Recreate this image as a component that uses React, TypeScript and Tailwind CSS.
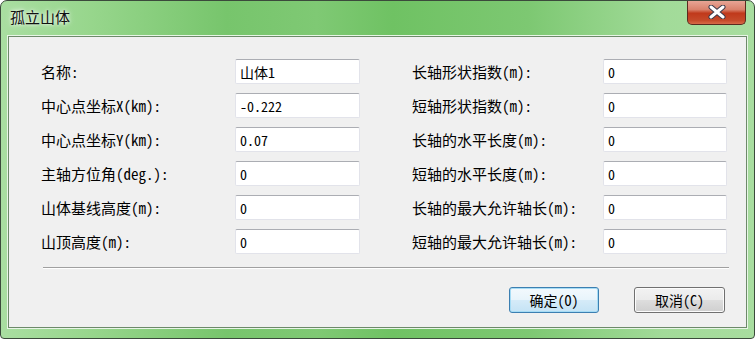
import React from "react";

const leftRows: [string, string][] = [
  ["名称:", "山体1"],
  ["中心点坐标X(km):", "-0.222"],
  ["中心点坐标Y(km):", "0.07"],
  ["主轴方位角(deg.):", "0"],
  ["山体基线高度(m):", "0"],
  ["山顶高度(m):", "0"],
];

const rightRows: [string, string][] = [
  ["长轴形状指数(m):", "0"],
  ["短轴形状指数(m):", "0"],
  ["长轴的水平长度(m):", "0"],
  ["短轴的水平长度(m):", "0"],
  ["长轴的最大允许轴长(m):", "0"],
  ["短轴的最大允许轴长(m):", "0"],
];

const font = { fontFamily: '"Noto Sans CJK SC", "DejaVu Sans", sans-serif' };
const monoFont = {
  fontFamily: '"Noto Sans Mono CJK SC", "Noto Sans CJK SC", "DejaVu Sans", sans-serif',
};

function Field({ value, width }: { value: string; width: string }) {
  return (
    <div
      className={`${width} h-[25px] bg-white border border-[#e2e3ea] border-t-[#abadb3] rounded-[2px] flex items-center pl-[4px] text-[14px] text-black leading-none`}
      style={monoFont}
    >
      {value}
    </div>
  );
}

export default function App() {
  return (
    <div
      className="w-[755px] h-[339px] relative overflow-hidden rounded-t-[7px] rounded-b-[4px] border border-[#3b4a3b] flex flex-col"
      style={{
        ...font,
        background:
          "linear-gradient(90deg, #a9dea1 0%, #97d68c 12%, #77c56c 30%, #7fc974 42%, #6fc263 52%, #7dc872 70%, #a2db99 88%, #a8dd9f 100%)",
      }}
    >
      {/* Title bar */}
      <div className="h-[35px] flex items-start justify-between shrink-0">
        <div
          className="pl-[9px] pt-[8px] text-[15px] text-[#111] leading-none"
          style={{ textShadow: "0 0 6px rgba(255,255,255,0.9), 0 0 3px rgba(255,255,255,0.9)" }}
        >
          孤立山体
        </div>
        <div className="mr-[8px] w-[59px] h-[25px] -mt-px rounded-b-[5px] border border-[#5a2a1f] border-t-0 flex items-center justify-center bg-[linear-gradient(180deg,#e9a99a_0%,#d9826c_40%,#c0391b_55%,#c54a2a_85%,#d86a48_100%)]">
          <svg width="18" height="14" viewBox="0 0 18 14">
            <path
              d="M3 2 L15 12 M15 2 L3 12"
              stroke="#3a3a4a"
              strokeWidth="5"
              strokeLinecap="round"
            />
            <path
              d="M3 2 L15 12 M15 2 L3 12"
              stroke="#ffffff"
              strokeWidth="3"
              strokeLinecap="round"
            />
          </svg>
        </div>
      </div>

      {/* Client area */}
      <div className="mx-[7px] mb-[10px] flex-1 border border-[#6d8a6a] bg-[#f0f0f0] shadow-[0_0_0_1px_#e8f5e6] flex flex-col">
        <div className="flex pl-[32px] pt-[22px] text-[15px] text-black" style={monoFont}>
          <div className="flex flex-col gap-[9px]">
            {leftRows.map(([label, value]) => (
              <div key={label} className="flex items-center h-[25px]">
                <div className="w-[194px] leading-none">{label}</div>
                <Field value={value} width="w-[125px]" />
              </div>
            ))}
          </div>
          <div className="flex flex-col gap-[9px] ml-[52px]">
            {rightRows.map(([label, value]) => (
              <div key={label} className="flex items-center h-[25px]">
                <div className="w-[191px] leading-none">{label}</div>
                <Field value={value} width="w-[124px]" />
              </div>
            ))}
          </div>
        </div>

        <div className="ml-[34px] mr-[17px] mt-[13px] h-[2px] border-t border-[#a0a0a0] border-b border-b-white" />

        <div className="flex justify-end gap-[35px] mt-[18px] mr-[21px]">
          <button
            className="w-[90px] h-[26px] rounded-[3px] border border-[#3c7fb1] text-[14px] text-black leading-none shadow-[inset_0_0_0_1px_#a6dcf5] bg-[linear-gradient(180deg,#f3f9fd_0%,#e8f4fb_48%,#d5ebf8_52%,#c4e3f5_100%)]"
            style={monoFont}
          >
            确定(O)
          </button>
          <button
            className="w-[91px] h-[26px] rounded-[3px] border border-[#707070] text-[14px] text-black leading-none shadow-[inset_0_0_0_1px_#fcfcfc] bg-[linear-gradient(180deg,#f2f2f2_0%,#ebebeb_48%,#dddddd_52%,#cfcfcf_100%)]"
            style={monoFont}
          >
            取消(C)
          </button>
        </div>
      </div>
    </div>
  );
}
